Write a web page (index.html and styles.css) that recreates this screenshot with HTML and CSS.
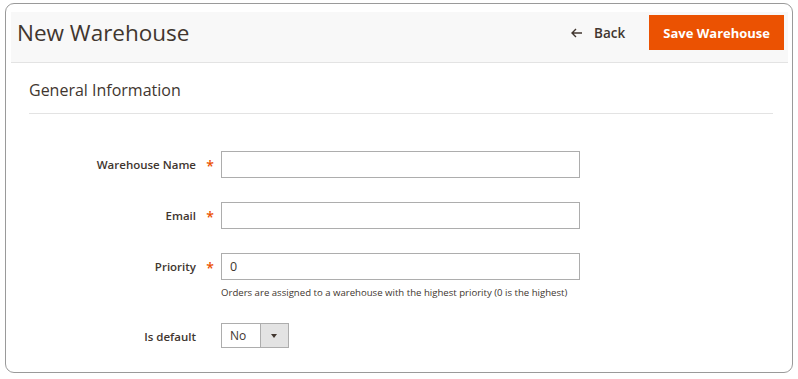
FILE: index.html
```html
<!DOCTYPE html>
<html>
<head>
    <title>New Warehouse</title>
    <meta name="viewport" content="width=device-width, initial-scale=1">
    <link rel="stylesheet" href="styles.css">
</head>
<body>
    <div class="window">
        <div class="page-header">
            <h1>New Warehouse</h1>
            <div class="actions">
                <a class="back" href="#">
                    <svg width="12" height="10" viewBox="0 0 12 10"><path d="M5 1 L1 5 L5 9 M1 5 H11" fill="none" stroke="#41362f" stroke-width="1.4"/></svg>
                    Back
                </a>
                <button type="button" class="primary">Save Warehouse</button>
            </div>
        </div>
        <div class="content">
            <h2 class="section-title">General Information</h2>
            <form class="form">
                <div class="field">
                    <label for="name" class="required">Warehouse Name</label>
                    <div class="control"><input type="text" id="name"></div>
                </div>
                <div class="field">
                    <label for="email" class="required">Email</label>
                    <div class="control"><input type="text" id="email"></div>
                </div>
                <div class="field">
                    <label for="priority" class="required">Priority</label>
                    <div class="control">
                        <input type="text" id="priority" value="0">
                        <div class="note">Orders are assigned to a warehouse with the highest priority (0 is the highest)</div>
                    </div>
                </div>
                <div class="field">
                    <label for="isDefault">Is default</label>
                    <div class="control">
                        <div class="select">
                            <span class="value">No</span>
                            <span class="arrow"></span>
                        </div>
                    </div>
                </div>
            </form>
        </div>
    </div>
</body>
</html>
```

FILE: styles.css
```css
body {
    font-family: "Open Sans", Arial, sans-serif;
    margin: 0;
    padding: 3px 5px 0 5px;
    background: #fff;
    color: #41362f;
}
.window {
    box-sizing: border-box;
    height: 370px;
    border: 1px solid #9a9a9a;
    border-radius: 9px;
    padding: 8px 4px 0 5px;
}
.page-header {
    display: flex;
    justify-content: space-between;
    align-items: flex-start;
    box-sizing: border-box;
    height: 51px;
    padding-top: 3px;
    background: #f8f8f8;
    border-bottom: 1px solid #e3e3e3;
}
h1 {
    margin: 0 0 0 6px;
    font-size: 22.5px;
    line-height: 35px;
    font-weight: 400;
    color: #41362f;
}
.actions {
    display: flex;
    align-items: center;
    margin-right: 4px;
}
.back {
    display: flex;
    align-items: center;
    gap: 11px;
    color: #41362f;
    text-decoration: none;
    font-weight: 600;
    font-size: 13.5px;
    margin-right: 24px;
}
.primary {
    height: 35px;
    padding: 0 14px;
    background: #eb5202;
    border: none;
    color: #fff;
    font-family: "Open Sans", Arial, sans-serif;
    font-size: 13px;
    font-weight: 700;
}
.content {
    padding: 0 15px 0 18px;
}
.section-title {
    margin: 0;
    padding: 16px 0 12px 0;
    font-size: 16px;
    font-weight: 400;
    border-bottom: 1px solid #e3e3e3;
}
.form {
    padding-top: 37px;
}
.field {
    display: flex;
    margin-bottom: 24px;
}
.field label {
    width: 167px;
    padding-right: 25px;
    text-align: right;
    font-size: 11.5px;
    font-weight: 600;
    line-height: 27px;
    position: relative;
}
.field label.required::after {
    content: "*";
    color: #eb5202;
    position: absolute;
    right: 7px;
    top: 1px;
    font-size: 14px;
}
.control input {
    box-sizing: border-box;
    width: 359px;
    height: 27px;
    border: 1px solid #adadad;
    padding: 0 8px;
    font-family: "Open Sans", Arial, sans-serif;
    font-size: 12.5px;
    color: #41362f;
}
.note {
    font-size: 9.6px;
    margin-top: 6px;
    margin-bottom: 0;
}
.select {
    display: flex;
    box-sizing: border-box;
    width: 68px;
    height: 25px;
    border: 1px solid #adadad;
    font-size: 12px;
}
.select .value {
    flex: 1;
    padding-left: 8px;
    line-height: 23px;
}
.select .arrow {
    width: 27px;
    background: #e3e3e3;
    border-left: 1px solid #adadad;
    position: relative;
}
.select .arrow::after {
    content: "";
    position: absolute;
    left: 10px;
    top: 10px;
    border-left: 3px solid transparent;
    border-right: 3px solid transparent;
    border-top: 4px solid #41362f;
}
```
